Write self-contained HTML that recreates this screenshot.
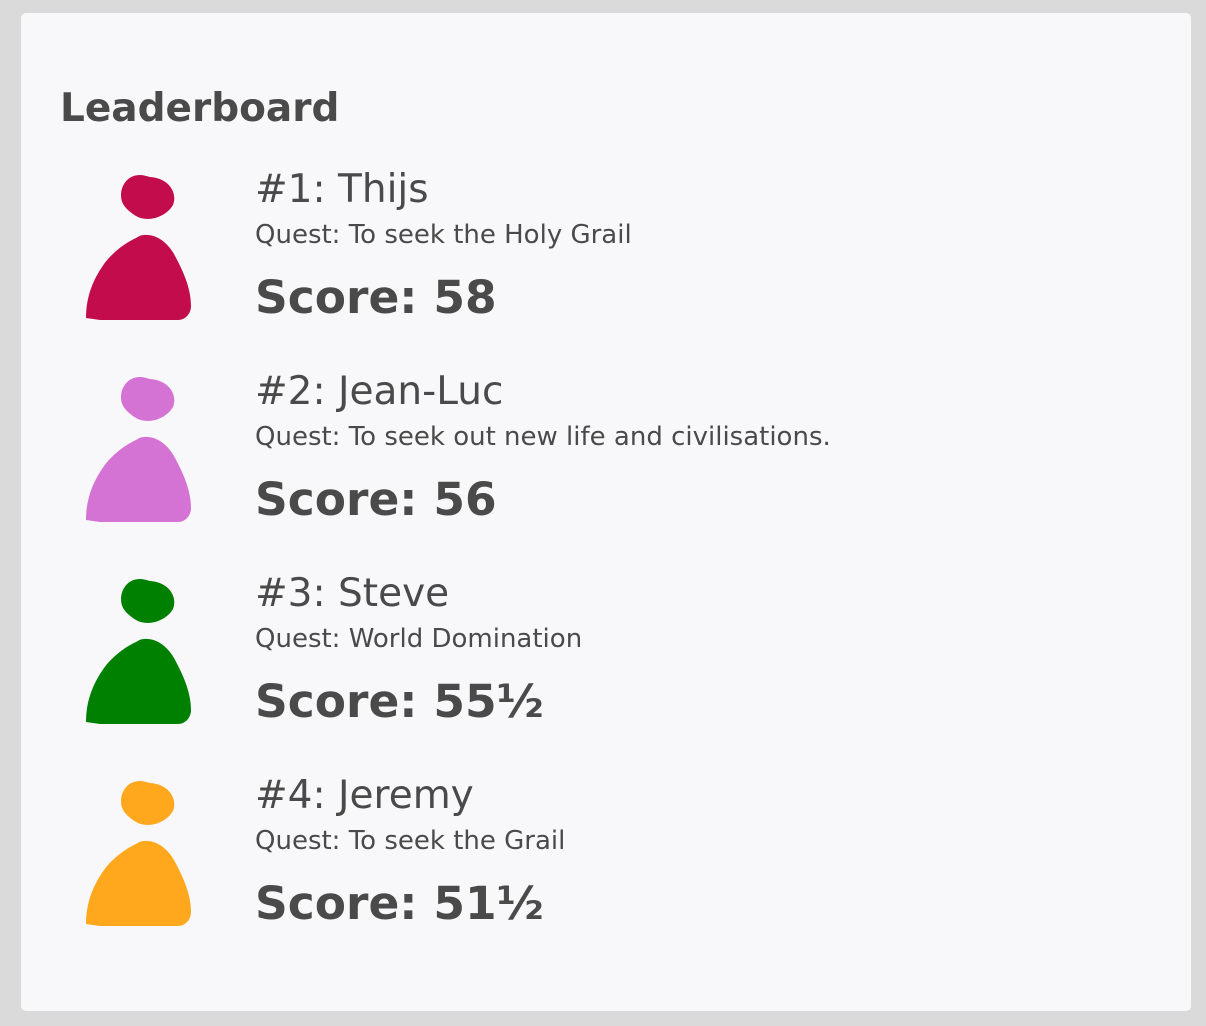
<!DOCTYPE html>
<html><head><meta charset="utf-8"><style>
html,body{margin:0;padding:0;background:#dadada;width:1206px;height:1026px;overflow:hidden}
body{font-family:"DejaVu Sans","Liberation Sans",sans-serif;color:#4a4a4a}
.card{position:absolute;left:21px;top:13px;width:1170px;height:998px;background:#f8f8fa;border-radius:5px}
.t{position:absolute;line-height:1;white-space:nowrap}
h1{position:absolute;left:60px;top:89px;margin:0;font-size:39px;line-height:1;font-weight:bold}
svg{position:absolute;left:80px}
</style></head><body>
<div class="card"></div>
<h1>Leaderboard</h1>
<svg style="top:170px" width="120" height="155" viewBox="0 0 120 155"><g fill="#c30c4c"><path d="M60 5C48 5 41 15 41 25C41 35 47 40 56 46C68 53 86 47 93 35C98 22 88 8 70 7C66 6 63 5 60 5Z"/><path d="M64 65C76 64 87 72 94 84C102 99 111 117 111 136C111 144 105 150 98 150L20 150L6 148C6 128 12 111 24 94C32 83 45 73 56 68C59 66 61 65 64 65Z"/></g></svg>
<div class="t" style="left:255px;top:170px;font-size:39px">#1: Thijs</div>
<div class="t" style="left:255px;top:222px;font-size:26px">Quest: To seek the Holy Grail</div>
<div class="t" style="left:255px;top:275px;font-size:45.5px;font-weight:bold">Score: 58</div>

<svg style="top:372px" width="120" height="155" viewBox="0 0 120 155"><g fill="#d473d4"><path d="M60 5C48 5 41 15 41 25C41 35 47 40 56 46C68 53 86 47 93 35C98 22 88 8 70 7C66 6 63 5 60 5Z"/><path d="M64 65C76 64 87 72 94 84C102 99 111 117 111 136C111 144 105 150 98 150L20 150L6 148C6 128 12 111 24 94C32 83 45 73 56 68C59 66 61 65 64 65Z"/></g></svg>
<div class="t" style="left:255px;top:372px;font-size:39px">#2: Jean-Luc</div>
<div class="t" style="left:255px;top:424px;font-size:26px">Quest: To seek out new life and civilisations.</div>
<div class="t" style="left:255px;top:477px;font-size:45.5px;font-weight:bold">Score: 56</div>

<svg style="top:574px" width="120" height="155" viewBox="0 0 120 155"><g fill="#008000"><path d="M60 5C48 5 41 15 41 25C41 35 47 40 56 46C68 53 86 47 93 35C98 22 88 8 70 7C66 6 63 5 60 5Z"/><path d="M64 65C76 64 87 72 94 84C102 99 111 117 111 136C111 144 105 150 98 150L20 150L6 148C6 128 12 111 24 94C32 83 45 73 56 68C59 66 61 65 64 65Z"/></g></svg>
<div class="t" style="left:255px;top:574px;font-size:39px">#3: Steve</div>
<div class="t" style="left:255px;top:626px;font-size:26px">Quest: World Domination</div>
<div class="t" style="left:255px;top:679px;font-size:45.5px;font-weight:bold">Score: 55½</div>

<svg style="top:776px" width="120" height="155" viewBox="0 0 120 155"><g fill="#ffa81e"><path d="M60 5C48 5 41 15 41 25C41 35 47 40 56 46C68 53 86 47 93 35C98 22 88 8 70 7C66 6 63 5 60 5Z"/><path d="M64 65C76 64 87 72 94 84C102 99 111 117 111 136C111 144 105 150 98 150L20 150L6 148C6 128 12 111 24 94C32 83 45 73 56 68C59 66 61 65 64 65Z"/></g></svg>
<div class="t" style="left:255px;top:776px;font-size:39px">#4: Jeremy</div>
<div class="t" style="left:255px;top:828px;font-size:26px">Quest: To seek the Grail</div>
<div class="t" style="left:255px;top:881px;font-size:45.5px;font-weight:bold">Score: 51½</div>
</body></html>
